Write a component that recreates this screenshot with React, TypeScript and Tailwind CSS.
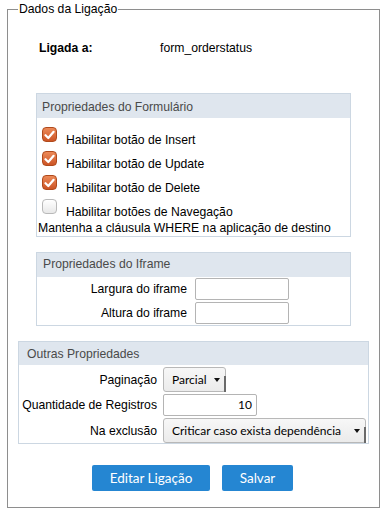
import React from 'react';

const arial = { fontFamily: '"Liberation Sans", Arial, sans-serif' };
const ui = { fontFamily: 'Lato, "Open Sans", sans-serif' };

const Check: React.FC<{ checked?: boolean }> = ({ checked }) =>
    checked ? (
        <span className="w-[15px] h-[15px] shrink-0 rounded-[4px] border border-[#b04a1c] bg-gradient-to-b from-[#ec8a58] to-[#cc5424] flex items-center justify-center">
            <svg width="11" height="10" viewBox="0 0 11 10">
                <path d="M1.5 5.2 L4.3 8 L9.6 1.8" fill="none" stroke="#fff" strokeWidth="2.2" strokeLinecap="round" strokeLinejoin="round" />
            </svg>
        </span>
    ) : (
        <span className="w-[15px] h-[15px] shrink-0 rounded-[4px] border border-[#b9b9b9] bg-gradient-to-b from-[#ffffff] to-[#e8e8e8]" />
    );

const Select: React.FC<{ value: string; className: string }> = ({ value, className }) => (
    <div className={`relative flex items-center rounded-[3px] border border-[#b8b8b8] bg-gradient-to-b from-[#f7f7f7] to-[#ebebeb] text-[12px] text-black whitespace-nowrap ${className}`} style={ui}>
        <span className="pl-[8px] flex-1">{value}</span>
        <svg width="6" height="4" viewBox="0 0 6 4" className="mr-[5px] mt-[1px]">
            <path d="M0 0 H6 L3 4 Z" fill="#111" />
        </svg>
        <span className="absolute right-[-1px] top-[8px] bottom-[-1px] w-[2px] bg-[#6a6a6a]" />
    </div>
);

const PanelHeader: React.FC<{ title: string; className: string }> = ({ title, className }) => (
    <div className={`bg-[#dfe6ee] leading-[16px] text-[#4a4a4a] ${className}`}>{title}</div>
);

const App: React.FC = () => {
    const checks = [
        { label: 'Habilitar botão de Insert', checked: true },
        { label: 'Habilitar botão de Update', checked: true },
        { label: 'Habilitar botão de Delete', checked: true },
        { label: 'Habilitar botões de Navegação', checked: false },
    ];

    return (
        <div className="w-[386px] h-[513px] bg-white text-black text-[12.2px]" style={arial}>
            <fieldset className="ml-[7px] w-[373px] h-[508px] border border-[#8e8e8e]">
                <legend className="ml-[10px] px-[1px] text-[12.2px] leading-[18px]">Dados da Ligação</legend>

                <div className="mt-[22px] pl-[31px] flex leading-[16px]">
                    <span className="w-[121px] font-bold">Ligada a:</span>
                    <span>form_orderstatus</span>
                </div>

                <div className="mt-[37px] ml-[28px] w-[315px] border border-[#ccd7e2]">
                    <PanelHeader title="Propriedades do Formulário" className="h-[24px] pl-[5px] pt-[5px]" />
                    <div className="pt-[9px] leading-[16px]">
                        {checks.map((c, i) => (
                            <div key={c.label} className={`flex items-start pl-[5px] ${i < 3 ? 'h-[24px]' : ''}`}>
                                <Check checked={c.checked} />
                                <span className="ml-[9px] mt-[5px]">{c.label}</span>
                            </div>
                        ))}
                        <div className="pl-[1px] whitespace-nowrap">Mantenha a cláusula WHERE na aplicação de destino</div>
                    </div>
                </div>

                <div className="mt-[15px] ml-[28px] w-[315px] border border-[#ccd7e2]">
                    <PanelHeader title="Propriedades do Iframe" className="h-[24px] pl-[6px] pt-[3px]" />
                    <div className="pt-[1px] pb-[1px] flex flex-col gap-[2px] leading-[16px]">
                        {['Largura do iframe', 'Altura do iframe'].map((l) => (
                            <div key={l} className="flex items-center">
                                <span className="w-[150px] text-right">{l}</span>
                                <input className="ml-[8px] w-[94px] h-[22px] rounded-[2px] border border-[#b4b4b4] bg-white outline-none" />
                            </div>
                        ))}
                    </div>
                </div>

                <div className="mt-[15px] ml-[10px] w-[351px] border border-[#ccd7e2]">
                    <PanelHeader title="Outras Propriedades" className="h-[23px] pl-[8px] pt-[4px]" />
                    <div className="pt-[2px] flex flex-col gap-[2px] leading-[16px]">
                        <div className="flex items-center">
                            <span className="w-[138px] text-right">Paginação</span>
                            <Select value="Parcial" className="ml-[6px] w-[63px] h-[25px]" />
                        </div>
                        <div className="flex items-center">
                            <span className="w-[138px] text-right whitespace-nowrap">Quantidade de Registros</span>
                            <div className="ml-[6px] w-[94px] h-[22px] rounded-[2px] border border-[#b4b4b4] bg-white flex items-center justify-end pr-[4px] text-[12px]" style={ui}>10</div>
                        </div>
                        <div className="flex items-center">
                            <span className="w-[138px] text-right">Na exclusão</span>
                            <Select value="Criticar caso exista dependência" className="ml-[6px] w-[203px] h-[25px]" />
                        </div>
                    </div>
                </div>

                <div className="mt-[21px] ml-[84px] flex gap-[12px]" style={ui}>
                    <button className="w-[118px] h-[26px] rounded-[2px] bg-[#2586d2] text-white text-[13.5px]">Editar Ligação</button>
                    <button className="w-[71px] h-[26px] rounded-[2px] bg-[#2586d2] text-white text-[13.5px]">Salvar</button>
                </div>
            </fieldset>
        </div>
    );
};

export default App;
